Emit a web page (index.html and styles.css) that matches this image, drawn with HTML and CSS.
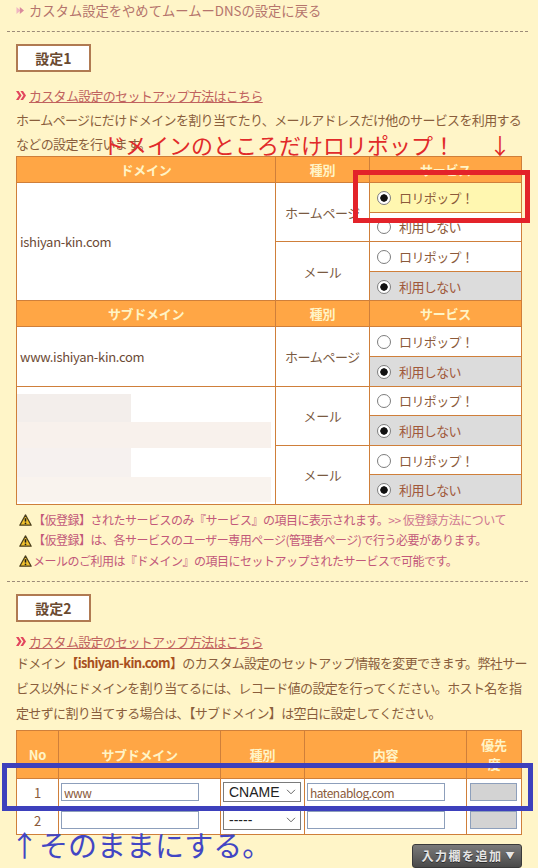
FILE: index.html
```html
<!DOCTYPE html>
<html lang="ja">
<head>
    <meta charset="UTF-8">
    <meta name="viewport" content="width=device-width, initial-scale=1.0">
    <title>カスタム設定</title>
    <link rel="stylesheet" href="styles.css">
</head>
<body>
<div class="page">

    <p class="back">
        <svg class="back-icon" width="9" height="9" viewBox="0 0 9 9"><path d="M0.5 1 L4.5 4.5 L0.5 8 Z" fill="#f0b6c2"/><path d="M3.8 1 L8 4.5 L3.8 8 Z" fill="#d98a9c"/></svg>
        <a href="#">カスタム設定をやめてムームーDNSの設定に戻る</a>
    </p>
    <hr class="dash">

    <section class="setting" id="setting1">
        <h2 class="setting-title">設定1</h2>
        <p class="howto">
            <svg width="10" height="9" viewBox="0 0 10 9"><path d="M0 0h2.6l3 4.5-3 4.5H0l3-4.5z" fill="#e2465e"/><path d="M4.4 0H7l3 4.5L7 9H4.4l3-4.5z" fill="#e2465e"/></svg>
            <a href="#">カスタム設定のセットアップ方法はこちら</a>
        </p>
        <p class="desc">ホームページにだけドメインを割り当てたり、メールアドレスだけ他のサービスを利用する<br>などの設定を行います。</p>

        <table class="svc">
            <colgroup><col class="c-name"><col class="c-type"><col class="c-svc"></colgroup>
            <tr><th>ドメイン</th><th>種別</th><th>サービス</th></tr>
            <tr>
                <td class="name" rowspan="4">ishiyan-kin.com</td>
                <td class="type" rowspan="2">ホームページ</td>
                <td class="opt hl"><span class="radio on"></span>ロリポップ！</td>
            </tr>
            <tr><td class="opt"><span class="radio"></span>利用しない</td></tr>
            <tr>
                <td class="type" rowspan="2">メール</td>
                <td class="opt"><span class="radio"></span>ロリポップ！</td>
            </tr>
            <tr><td class="opt checked"><span class="radio on"></span>利用しない</td></tr>

            <tr><th>サブドメイン</th><th>種別</th><th>サービス</th></tr>
            <tr>
                <td class="name" rowspan="2">www.ishiyan-kin.com</td>
                <td class="type" rowspan="2">ホームページ</td>
                <td class="opt"><span class="radio"></span>ロリポップ！</td>
            </tr>
            <tr><td class="opt checked"><span class="radio on"></span>利用しない</td></tr>
            <tr>
                <td class="blur-cell" rowspan="4">
                    <div class="blur">
                        <div class="blur-a"></div>
                        <div class="blur-b"></div>
                        <div class="blur-c"></div>
                        <div class="blur-d"></div>
                    </div>
                </td>
                <td class="type" rowspan="2">メール</td>
                <td class="opt"><span class="radio"></span>ロリポップ！</td>
            </tr>
            <tr><td class="opt checked"><span class="radio on"></span>利用しない</td></tr>
            <tr>
                <td class="type" rowspan="2">メール</td>
                <td class="opt"><span class="radio"></span>ロリポップ！</td>
            </tr>
            <tr><td class="opt checked"><span class="radio on"></span>利用しない</td></tr>
        </table>

        <ul class="notes">
            <li><svg class="warn" width="13" height="12" viewBox="0 0 13 12"><path d="M6.5 0.9 L12.2 11.2 H0.8 Z" fill="#f1c22e" stroke="#4b3f1e" stroke-width="1.2" stroke-linejoin="round"/><path d="M6.5 4.2v3.4" stroke="#1e1e1e" stroke-width="1.6"/><circle cx="6.5" cy="9.3" r="0.9" fill="#1e1e1e"/></svg>【仮登録】されたサービスのみ『サービス』の項目に表示されます。<a href="#">&gt;&gt; 仮登録方法について</a></li>
            <li><svg class="warn" width="13" height="12" viewBox="0 0 13 12"><path d="M6.5 0.9 L12.2 11.2 H0.8 Z" fill="#f1c22e" stroke="#4b3f1e" stroke-width="1.2" stroke-linejoin="round"/><path d="M6.5 4.2v3.4" stroke="#1e1e1e" stroke-width="1.6"/><circle cx="6.5" cy="9.3" r="0.9" fill="#1e1e1e"/></svg>【仮登録】は、各サービスのユーザー専用ページ(管理者ページ)で行う必要があります。</li>
            <li><svg class="warn" width="13" height="12" viewBox="0 0 13 12"><path d="M6.5 0.9 L12.2 11.2 H0.8 Z" fill="#f1c22e" stroke="#4b3f1e" stroke-width="1.2" stroke-linejoin="round"/><path d="M6.5 4.2v3.4" stroke="#1e1e1e" stroke-width="1.6"/><circle cx="6.5" cy="9.3" r="0.9" fill="#1e1e1e"/></svg>メールのご利用は『ドメイン』の項目にセットアップされたサービスで可能です。</li>
        </ul>
    </section>

    <hr class="dash">

    <section class="setting" id="setting2">
        <h2 class="setting-title">設定2</h2>
        <p class="howto">
            <svg width="10" height="9" viewBox="0 0 10 9"><path d="M0 0h2.6l3 4.5-3 4.5H0l3-4.5z" fill="#e2465e"/><path d="M4.4 0H7l3 4.5L7 9H4.4l3-4.5z" fill="#e2465e"/></svg>
            <a href="#">カスタム設定のセットアップ方法はこちら</a>
        </p>
        <p class="desc">ドメイン<strong>【ishiyan-kin.com】</strong>のカスタム設定のセットアップ情報を変更できます。弊社サー<br>ビス以外にドメインを割り当てるには、レコード値の設定を行ってください。ホスト名を指<br>定せずに割り当てする場合は、【サブドメイン】は空白に設定してください。</p>

        <table class="rec">
            <colgroup><col class="c-no"><col class="c-sub"><col class="c-kind"><col class="c-val"><col class="c-prio"></colgroup>
            <tr><th>No</th><th>サブドメイン</th><th>種別</th><th>内容</th><th>優先<br>度</th></tr>
            <tr>
                <td class="no">1</td>
                <td><input class="field" type="text" value="www"></td>
                <td><div class="select"><span>CNAME</span><svg width="10" height="6" viewBox="0 0 10 6"><path d="M1 0.8l4 4 4-4" fill="none" stroke="#666" stroke-width="1"/></svg></div></td>
                <td><input class="field" type="text" value="hatenablog.com"></td>
                <td><input class="field prio" type="text" value=""></td>
            </tr>
            <tr>
                <td class="no">2</td>
                <td><input class="field" type="text" value=""></td>
                <td><div class="select"><span>-----</span><svg width="10" height="6" viewBox="0 0 10 6"><path d="M1 0.8l4 4 4-4" fill="none" stroke="#666" stroke-width="1"/></svg></div></td>
                <td><input class="field" type="text" value=""></td>
                <td><input class="field prio" type="text" value=""></td>
            </tr>
        </table>

        <div class="add-row">
            <button class="add-btn">入力欄を追加<span class="add-arrow">▼</span></button>
        </div>
    </section>

    <!-- 注釈 -->
    <div class="memo memo-red">ドメインのところだけロリポップ！</div>
    <div class="memo memo-red memo-red-arrow">↓</div>
    <div class="mark mark-red"></div>
    <div class="mark mark-blue"></div>
    <div class="memo memo-blue">↑そのままにする。</div>

</div>
</body>
</html>
```

FILE: styles.css
```css
body {
    margin: 0;
    background-color: #fff5c8;
    font-family: "Noto Sans CJK JP", sans-serif;
    font-size: 13px;
    color: #8a5e3c;
}
.page {
    position: relative;
    height: 868px;
    overflow: hidden;
}
.back {
    margin: 0;
    padding-left: 16px;
    height: 21px;
    display: flex;
    align-items: center;
    gap: 4px;
}
.back a {
    color: #b5746c;
    text-decoration: none;
    font-size: 13.3px;
}
.dash {
    margin: 10px 10px 0 7px;
    border: 0;
    border-top: 1px dashed #9c8b78;
}
.setting {
    padding: 0 16px;
}
.setting-title {
    margin: 12px 0 0;
    width: 75px;
    height: 28px;
    box-sizing: border-box;
    border: 2px solid #b07a52;
    background-color: #fff;
    color: #6a4a30;
    font-size: 14px;
    line-height: 24px;
    text-align: center;
}
.howto {
    margin: 13px 0 0;
    height: 20px;
    display: flex;
    align-items: center;
    gap: 3px;
}
.howto a {
    color: #c0625e;
    letter-spacing: -0.7px;
}
.desc {
    margin: 3px 0 0;
    line-height: 24px;
    letter-spacing: -0.65px;
    white-space: nowrap;
}
.desc strong {
    color: #a8501e;
}
#setting2 .howto {
    margin-top: 9px;
}
#setting2 .desc {
    margin: 0 0 4px;
    line-height: 24.8px;
}

/* サービス表 */
.svc, .rec {
    border-collapse: collapse;
    table-layout: fixed;
    width: 505px;
}
.svc th, .svc td, .rec th, .rec td {
    border: 1px solid #cf7f3a;
    padding: 0;
}
.svc th, .rec th {
    background-color: #ffa645;
    color: #fff4c6;
    font-weight: bold;
    height: 25px;
    letter-spacing: -0.3px;
}
.c-name { width: 259px; }
.c-type { width: 94px; }
.c-svc { width: 152px; }
.svc td {
    background-color: #fff;
}
.svc .name {
    padding-left: 3px;
    color: #6b4a35;
    letter-spacing: -0.3px;
}
.svc .type {
    text-align: center;
    color: #7a5a42;
    letter-spacing: -0.4px;
}
.svc .opt {
    height: 28.6px;
    padding-left: 7px;
    letter-spacing: -0.6px;
    color: #8c5a3a;
}
.svc .opt.hl {
    background-color: #fff7b0;
}
.svc .opt.checked {
    background-color: #dcdcdc;
    color: #a0583a;
}
.radio {
    display: inline-block;
    width: 14px;
    height: 14px;
    box-sizing: border-box;
    border: 1px solid #7d7d7d;
    border-radius: 50%;
    background: #fff;
    vertical-align: -2px;
    margin-right: 8px;
}
.radio.on {
    background: radial-gradient(circle, #111 0 3.4px, #fff 4px);
}
.svc .blur-cell {
    vertical-align: top;
}
.blur {
    padding-top: 7px;
}
.blur-a { height: 28px; width: 114px; background-color: #f3eeeb; }
.blur-b { height: 26px; width: 254px; background-color: #f8f1ec; }
.blur-c { height: 29px; width: 114px; background-color: #f6f1ef; }
.blur-d { height: 25px; width: 254px; background-color: #f9f3ee; }

.notes {
    list-style: none;
    margin: 5px 0 0;
    padding: 0 0 0 3px;
    font-size: 12px;
    letter-spacing: -0.5px;
    color: #c2587a;
}
.notes li {
    display: flex;
    align-items: center;
    line-height: 20.5px;
}
.notes .warn {
    flex: none;
    margin-right: 1px;
}
.notes a {
    color: #cf7690;
    text-decoration: none;
}

/* レコード表 */
.c-no { width: 42px; }
.c-sub { width: 162px; }
.c-kind { width: 84px; }
.c-val { width: 162px; }
.c-prio { width: 55px; }
.rec th {
    height: 47px;
    line-height: 19px;
}
.rec td {
    height: 27px;
    background-color: #fff;
}
.rec .no {
    text-align: center;
    color: #8a5a3a;
}
.field {
    display: block;
    width: 138px;
    height: 18px;
    box-sizing: border-box;
    margin-left: 2px;
    padding: 0 2px;
    border: 1px solid #8d9fbb;
    background-color: #fff;
    font-family: "Noto Sans CJK JP", sans-serif;
    font-size: 12px;
    letter-spacing: -0.5px;
    color: #8a5a3a;
}
.field.prio {
    width: 47px;
    margin-left: 3px;
    background-color: #d3d3d3;
}
.select {
    display: flex;
    justify-content: space-between;
    align-items: center;
    width: 78px;
    height: 20px;
    box-sizing: border-box;
    margin-left: 2px;
    padding: 0 4px 0 5px;
    border: 1px solid #7b7b7b;
    background-color: #fff;
    font-family: "Liberation Sans", Arial, sans-serif;
    font-size: 14px;
    color: #222;
}
.add-row {
    display: flex;
    justify-content: flex-end;
    margin-top: 9px;
}
.add-btn {
    display: flex;
    align-items: center;
    justify-content: center;
    gap: 3px;
    height: 24px;
    width: 110px;
    box-sizing: border-box;
    padding: 0 3px 0 5px;
    border: 1px solid #3a3a3a;
    border-radius: 3px;
    background: linear-gradient(#7a7a7a, #4a4a4a);
    color: #e6e6e6;
    font-family: "Noto Sans CJK JP", sans-serif;
    font-size: 12px;
    font-weight: bold;
    letter-spacing: 1.5px;
    white-space: nowrap;
    text-shadow: 0 1px 0 #2a2a2a;
}
.add-arrow {
    font-size: 9px;
    letter-spacing: 0;
    color: #e6e6e6;
}

/* 注釈（画像上の書き込み） */
.memo {
    position: absolute;
    white-space: nowrap;
}
.memo-red {
    left: 103px;
    top: 132px;
    font-size: 22px;
    line-height: 24px;
    color: #e12a2a;
}
.memo-red-arrow {
    left: 489px;
}
.memo-blue {
    left: 10px;
    top: 830px;
    font-size: 29px;
    line-height: 29px;
    color: #4246c4;
}
.mark {
    position: absolute;
    box-sizing: border-box;
}
.mark-red {
    left: 353px;
    top: 170px;
    width: 177px;
    height: 53px;
    border: 5px solid #e3232a;
}
.mark-blue {
    left: 2px;
    top: 763px;
    width: 531px;
    height: 48px;
    border: 5px solid #3d40bc;
}
```
